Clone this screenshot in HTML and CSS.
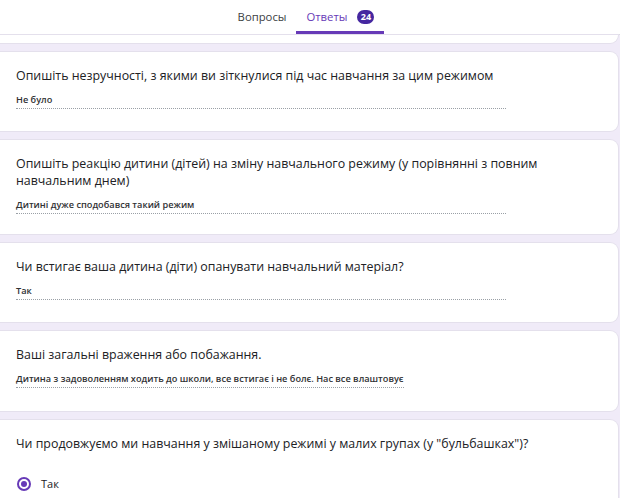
FILE: index.html
```html
<!DOCTYPE html>
<html lang="uk">
<head>
<meta charset="utf-8">
<link rel="stylesheet" href="styles.css">
</head>
<body>
<div class="page">
  <header class="tabs">
    <div class="tab">Вопросы</div>
    <div class="tab active">Ответы <span class="badge">24</span></div>
  </header>
  <main class="list">
    <div class="card sliver"></div>
    <section class="card">
      <div class="q">Опишіть незручності, з якими ви зіткнулися під час навчання за цим режимом</div>
      <div class="a full">Не було</div>
    </section>
    <section class="card">
      <div class="q">Опишіть реакцію дитини (дітей) на зміну навчального режиму (у порівнянні з повним навчальним днем)</div>
      <div class="a full">Дитині дуже сподобався такий режим</div>
    </section>
    <section class="card">
      <div class="q">Чи встигає ваша дитина (діти) опанувати навчальний матеріал?</div>
      <div class="a full">Так</div>
    </section>
    <section class="card">
      <div class="q">Ваші загальні враження або побажання.</div>
      <div class="a"><span class="a-inline">Дитина з задоволенням ходить до школи, все встигає і не болє. Нас все влаштовує</span></div>
    </section>
    <section class="card last">
      <div class="q">Чи продовжуємо ми навчання у змішаному режимі у малих групах (у "бульбашках")?</div>
      <div class="radio-row">
        <span class="radio"><span class="dot"></span></span>
        <span class="radio-label">Так</span>
      </div>
    </section>
  </main>
</div>
</body>
</html>
```

FILE: styles.css
```css
html, body {
  margin: 0;
  padding: 0;
}
body {
  font-family: "Open Sans", "Liberation Sans", sans-serif;
  color: #202124;
  background: #f0ebf8;
  width: 620px;
  height: 498px;
  overflow: hidden;
}
.page {
  width: 620px;
  height: 498px;
  overflow: hidden;
}
.tabs {
  height: 34px;
  background: #fff;
  border-bottom: 1px solid #dadce0;
  display: flex;
  justify-content: center;
  align-items: stretch;
  padding-right: 8px;
}
.tab {
  display: flex;
  align-items: center;
  padding: 2px 10px 0;
  font-size: 11.3px;
  color: #3c4043;
  border-bottom: 3px solid transparent;
}
.tab.active {
  color: #673ab7;
  border-bottom-color: #673ab7;
}
.badge {
  display: inline-flex;
  align-items: center;
  justify-content: center;
  width: 17px;
  height: 14px;
  border-radius: 8px;
  background: #4527a0;
  color: #fff;
  font-size: 9px;
  font-weight: 700;
  margin-left: 10px;
}
.list {
  display: flex;
  flex-direction: column;
  gap: 9px;
  margin-left: -10px;
  width: 628px;
}
.card {
  background: #fff;
  border-radius: 8px;
  box-shadow: 0 0 0 1px #e4e0ec;
  padding: 15px 0 0 26px;
  box-sizing: border-box;
}
.sliver {
  height: 8px;
  padding: 0;
  border-radius: 0 0 8px 8px;
}
.q {
  font-size: 12.4px;
  line-height: 17px;
  width: 560px;
}
.a {
  margin-top: 9px;
  width: 490px;
  font-size: 9.2px;
  font-weight: 600;
  color: #303134;
  padding-bottom: 2px;
}
.a.full {
  border-bottom: 1px dotted #9aa0a6;
}
.a-inline {
  border-bottom: 1px dotted #9aa0a6;
  padding-bottom: 2px;
}
.card:nth-child(2) { height: 79px; }
.card:nth-child(3) { height: 94px; }
.card:nth-child(4) { height: 79px; }
.card:nth-child(5) { height: 80px; }
.last { height: 100px; }
.radio-row {
  display: flex;
  align-items: center;
  gap: 10px;
  margin-top: 24px;
  margin-left: 1px;
}
.radio {
  width: 14px;
  height: 14px;
  border: 2px solid #673ab7;
  border-radius: 50%;
  display: flex;
  align-items: center;
  justify-content: center;
  box-sizing: border-box;
}
.dot {
  width: 6px;
  height: 6px;
  border-radius: 50%;
  background: #673ab7;
}
.radio-label {
  font-size: 11px;
}
```
